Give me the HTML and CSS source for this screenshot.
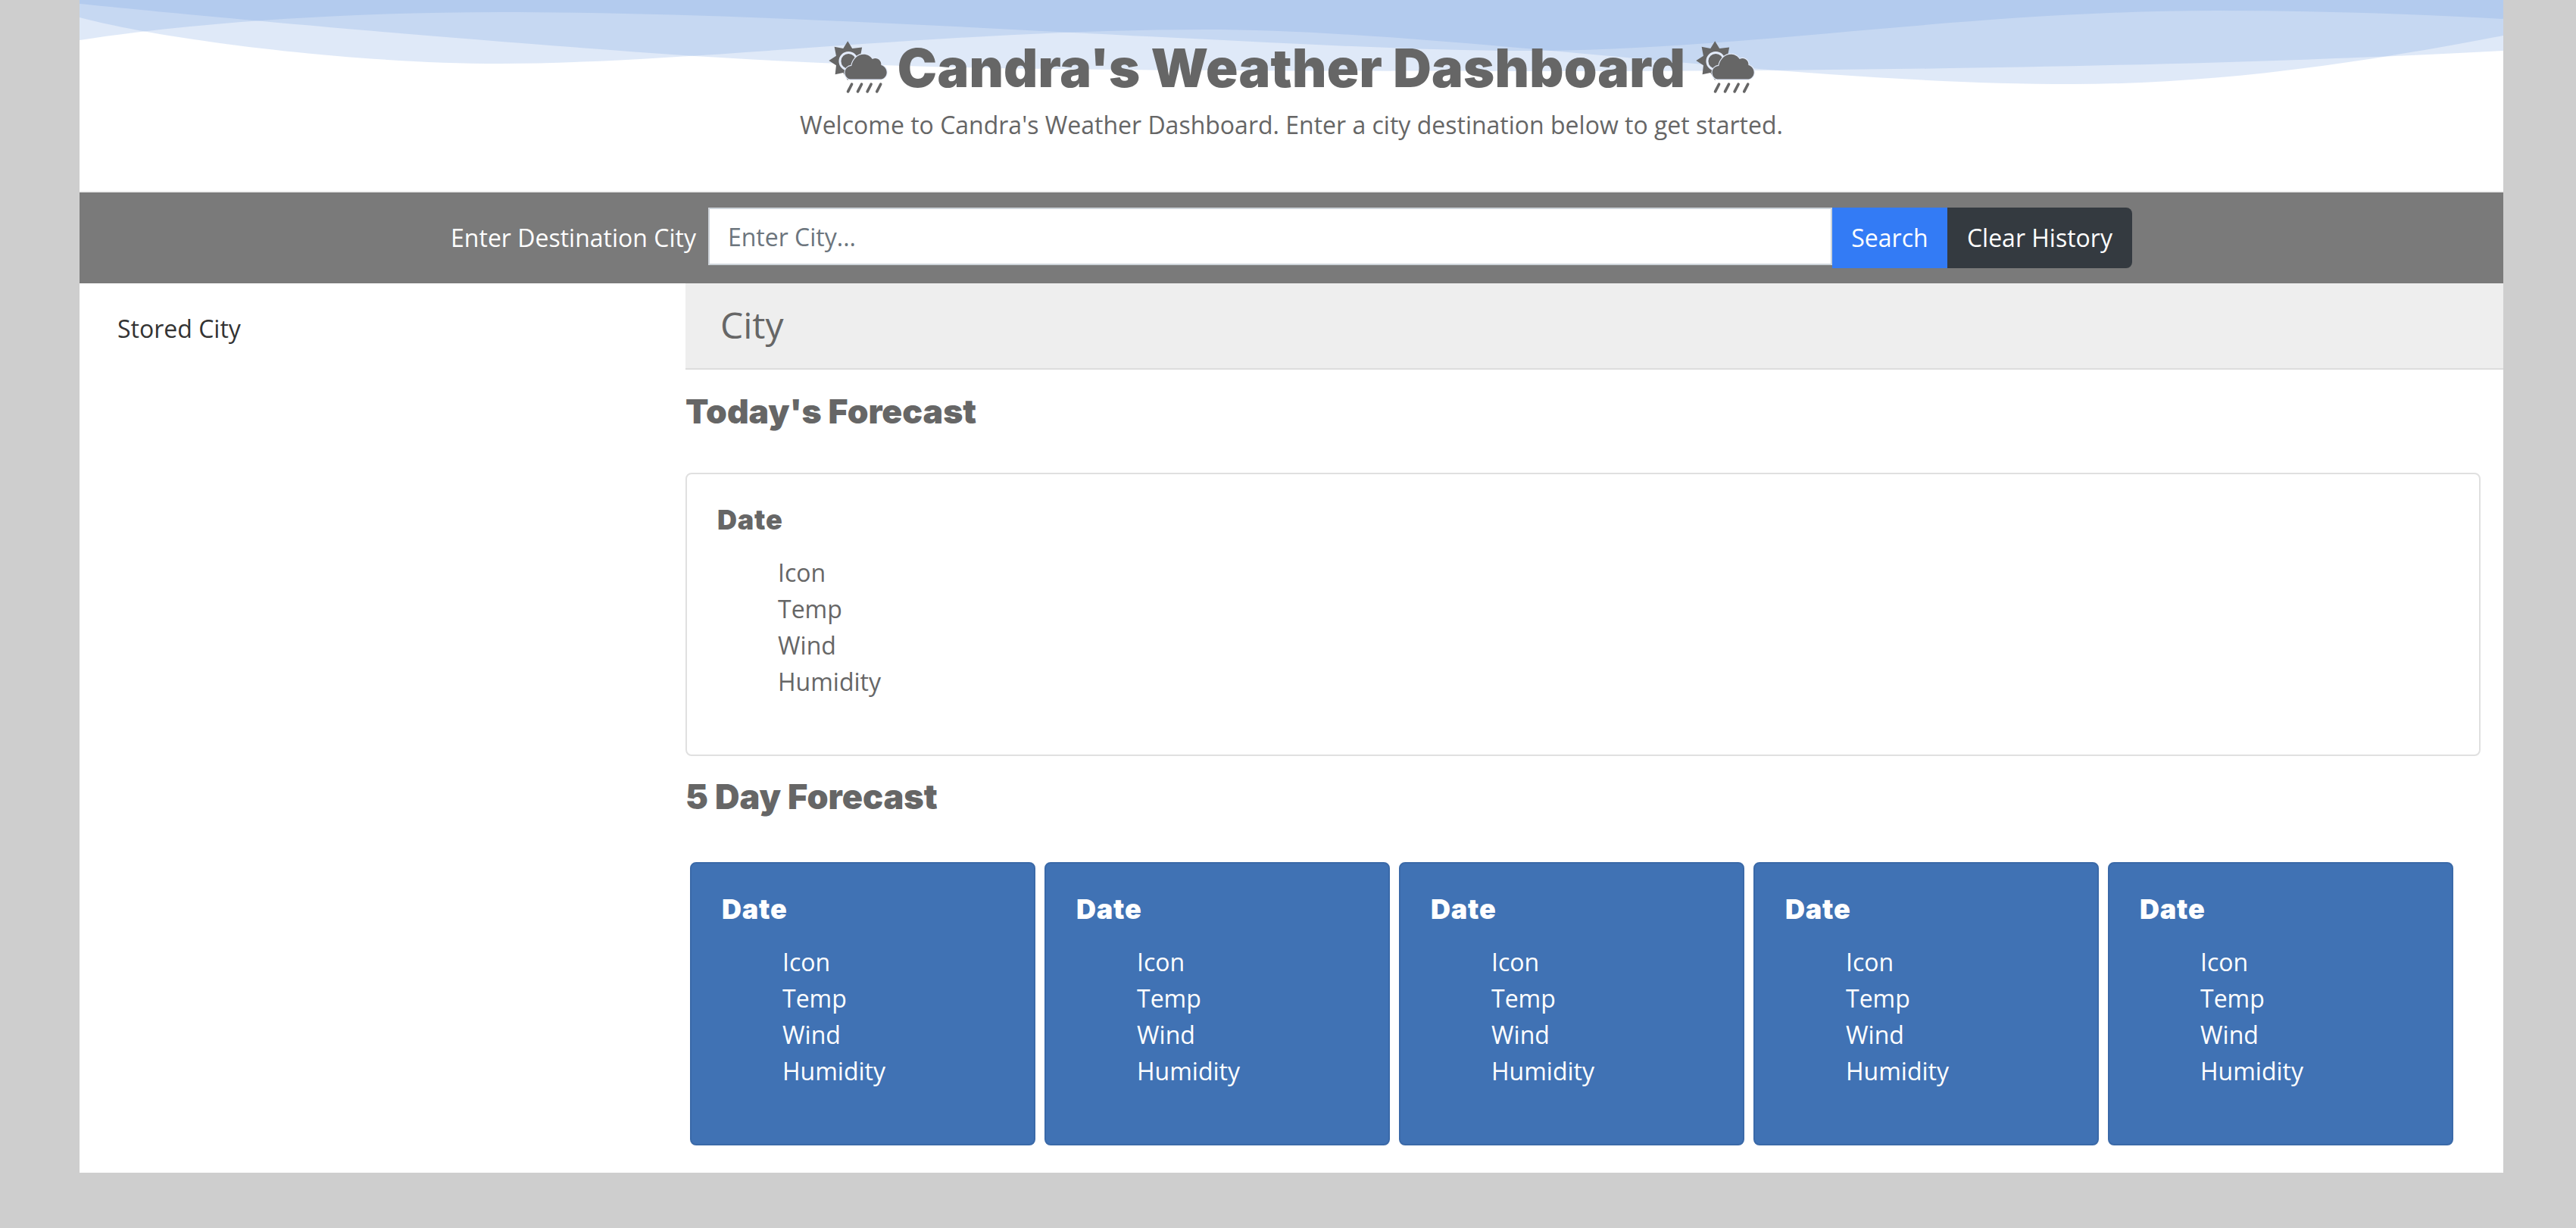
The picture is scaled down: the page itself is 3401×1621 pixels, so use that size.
FILE: index.html
```html
<!DOCTYPE html>
<html lang="en">
<head>
<meta charset="utf-8">
<title>Candra's Weather Dashboard</title>
<link rel="stylesheet" href="styles.css">
</head>
<body>
<svg class="defs" width="0" height="0" aria-hidden="true">
  <symbol id="cloud-sun-rain" viewBox="36 72 238 216">
    <polygon class="sun" points="115,72 133,102 172,97 165,133 192,150 165,167 170,205 131,198 115,228 97,198 65,205 69,169 40,150 69,131 62,95 97,102"/>
    <circle class="sun-ring" cx="118" cy="152" r="34"/>
    <path class="cloud" d="M130 224 C112 224 104 210 104 197 C104 182 116 172 130 171 C136 142 156 125 178 125 C194 125 206 133 213 144 C232 134 250 150 248 168 C262 172 270 184 270 197 C270 212 258 224 244 224 Z"/>
    <g class="rain">
      <line x1="131" y1="244" x2="116" y2="273"/>
      <line x1="170" y1="244" x2="155" y2="273"/>
      <line x1="208" y1="244" x2="193" y2="273"/>
      <line x1="246" y1="244" x2="231" y2="273"/>
    </g>
  </symbol>
</svg>
<div class="page">
  <header class="hero">
    <svg class="waves" viewBox="0 0 3200 120" width="3200" height="120" aria-hidden="true">
      <path d="M0 0 V5 C100 15 400 45 812 74 C1100 92 1300 93 1900 94 C2400 95 2900 84 3200 67 V0 Z"/>
      <path d="M0 0 V23 C100 50 350 84 555 84 C800 84 1150 39 1485 39 C1800 39 2250 111 2631 111 C2850 111 3050 75 3200 47 V0 Z"/>
      <path d="M0 0 V53 C150 30 350 16 555 16 C850 16 1200 38 1450 50 C1650 60 1800 68 1930 67 C2200 65 2500 14 2822 14 C2950 14 3080 18 3200 25 V0 Z"/>
    </svg>
    <h1 class="hero-title">
      <svg class="hero-icon" aria-hidden="true"><use href="#cloud-sun-rain"/></svg>
      <span>Candra's Weather Dashboard</span>
      <svg class="hero-icon" aria-hidden="true"><use href="#cloud-sun-rain"/></svg>
    </h1>
    <p class="hero-lead">Welcome to Candra's Weather Dashboard. Enter a city destination below to get started.</p>
  </header>

  <form class="search-bar">
    <label class="search-label" for="city">Enter Destination City</label>
    <input class="search-input" id="city" type="text" placeholder="Enter City...">
    <button class="btn btn-search" type="button">Search</button>
    <button class="btn btn-clear" type="button">Clear History</button>
  </form>

  <div class="content">
    <aside class="sidebar">Stored City</aside>
    <main class="main">
      <div class="city-bar">City</div>
      <h2 class="section-title section-today">Today's Forecast</h2>
      <section class="card card-today">
        <h3 class="card-date">Date</h3>
        <ul class="card-list"><li>Icon</li><li>Temp</li><li>Wind</li><li>Humidity</li></ul>
      </section>
      <h2 class="section-title section-five">5 Day Forecast</h2>
      <div class="forecast-row">
        <section class="card card-day">
          <h3 class="card-date">Date</h3>
          <ul class="card-list"><li>Icon</li><li>Temp</li><li>Wind</li><li>Humidity</li></ul>
        </section>
        <section class="card card-day">
          <h3 class="card-date">Date</h3>
          <ul class="card-list"><li>Icon</li><li>Temp</li><li>Wind</li><li>Humidity</li></ul>
        </section>
        <section class="card card-day">
          <h3 class="card-date">Date</h3>
          <ul class="card-list"><li>Icon</li><li>Temp</li><li>Wind</li><li>Humidity</li></ul>
        </section>
        <section class="card card-day">
          <h3 class="card-date">Date</h3>
          <ul class="card-list"><li>Icon</li><li>Temp</li><li>Wind</li><li>Humidity</li></ul>
        </section>
        <section class="card card-day">
          <h3 class="card-date">Date</h3>
          <ul class="card-list"><li>Icon</li><li>Temp</li><li>Wind</li><li>Humidity</li></ul>
        </section>
      </div>
    </main>
  </div>
</div>
</body>
</html>
```
FILE: styles.css
```css
* { box-sizing: border-box; }

html, body { margin: 0; padding: 0; }

body {
  background: #cecece;
  color: #666;
  font-family: "Open Sans", "Noto Sans", sans-serif;
  font-size: 32px;
  line-height: 48px;
  min-height: 1621px;
}

.defs { display: block; height: 0; }

.page {
  width: 3200px;
  margin-left: 105px;
  background: #fff;
}

/* Hero */
.hero {
  position: relative;
  height: 254px;
  padding-top: 54px;
  border-bottom: 2px solid #eee;
  text-align: center;
  overflow: hidden;
}

.waves {
  position: absolute;
  top: 0;
  left: 0;
  display: block;
}

.waves path { fill: #76a0e0; fill-opacity: 0.23; }

.hero-title {
  position: relative;
  display: flex;
  justify-content: center;
  align-items: center;
  gap: 13px;
  margin: 0;
  height: 72px;
  color: #666;
  font-family: "Inter", "Liberation Sans", sans-serif;
  font-weight: 900;
  font-size: 70px;
  letter-spacing: 0.25px;
  line-height: 72px;
}

.hero-icon { width: 79px; height: 72px; display: block; }

.sun { fill: #666; }
.sun-ring { fill: #666; stroke: #e3ebfa; stroke-width: 9; }
.cloud { fill: #666; stroke: #e3ebfa; stroke-width: 7; paint-order: stroke; }
.rain line { stroke: #666; stroke-width: 11; stroke-linecap: round; }

.hero-lead {
  position: relative;
  margin: 15px 0 0;
  color: #666;
}

/* Search bar */
.search-bar {
  display: flex;
  justify-content: center;
  align-items: flex-start;
  height: 120px;
  padding-top: 20px;
  background: #7a7a7a;
  margin: 0;
}

.search-label {
  height: 80px;
  line-height: 80px;
  margin-right: 16px;
  color: #fff;
}

.search-input {
  width: 1484px;
  height: 76px;
  padding: 0 24px;
  border: 2px solid #ced4da;
  border-radius: 0;
  background: #fff;
  color: #495057;
  font: inherit;
  outline: 0;
}

.search-input::placeholder { color: #6c757d; opacity: 1; }

.btn {
  height: 80px;
  padding: 0 24px;
  border: 0;
  color: #fff;
  font: inherit;
  line-height: 80px;
}

.btn-search { width: 152px; background: #337bf5; }
.btn-clear { width: 244px; background: #343a40; border-radius: 0 8px 8px 0; }

/* Content */
.content { display: flex; }

.sidebar {
  flex: 0 0 800px;
  padding: 36px 0 0 50px;
  color: #333;
}

.main { flex: 0 0 2400px; padding-bottom: 36px; }

.city-bar {
  height: 114px;
  padding: 0 46px;
  background: #eee;
  border-bottom: 2px solid #ddd;
  font-size: 48px;
  line-height: 110px;
}

.section-title {
  margin: 0;
  height: 56px;
  color: #666;
  font-family: "Inter", "Liberation Sans", sans-serif;
  font-weight: 900;
  line-height: 56px;
}

.section-today { margin-top: 27px; margin-bottom: 53px; font-size: 44.5px; }
.section-five { margin-top: 26px; margin-bottom: 58px; font-size: 45px; }

.card {
  padding: 40px 40px 0;
  border: 2px solid #e0e0e0;
  border-radius: 8px;
}

.card-today { width: 2370px; height: 374px; }

.card-date {
  margin: 0 0 25px;
  font-family: "Inter", "Liberation Sans", sans-serif;
  font-weight: 900;
  font-size: 36px;
  letter-spacing: 0.8px;
  line-height: 41px;
}

.card-list {
  margin: 0;
  padding: 0 0 0 80px;
  list-style: none;
}

.forecast-row {
  display: flex;
  gap: 12px;
  margin-left: 6px;
}

.card-day {
  flex: 0 0 456px;
  height: 374px;
  background: #4072b4;
  border-color: #3a69a8;
  color: #fff;
}
```
